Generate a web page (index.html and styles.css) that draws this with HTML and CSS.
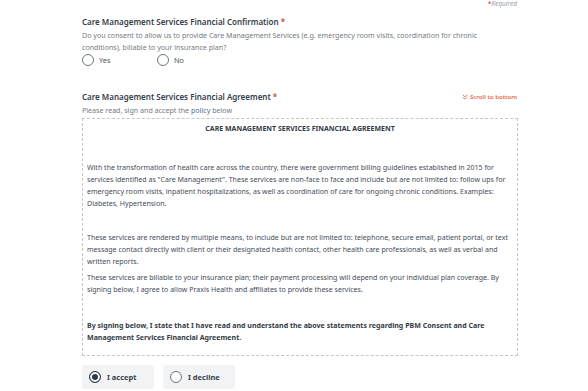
FILE: index.html
```html
<!DOCTYPE html>
<html lang="en">
<head>
    <meta charset="UTF-8">
    <title>Care Management Services</title>
    <link rel="stylesheet" href="styles.css">
</head>
<body>
    <div class="page">
        <div class="required"><span class="star">*</span>Required</div>

        <!-- Confirmation question -->
        <section class="field">
            <h2 class="field-title">Care Management Services Financial Confirmation <span class="star">*</span></h2>
            <p class="field-desc wrap">Do you consent to allow us to provide Care Management Services (e.g. emergency room visits, coordination for chronic conditions), billable to your insurance plan?</p>
            <div class="choices">
                <label class="choice"><span class="radio"></span>Yes</label>
                <label class="choice"><span class="radio"></span>No</label>
            </div>
        </section>

        <!-- Agreement -->
        <section class="field agreement">
            <div class="field-head">
                <h2 class="field-title">Care Management Services Financial Agreement <span class="star">*</span></h2>
                <a class="scroll-link" href="#">
                    <svg width="6" height="6" viewBox="0 0 8 8"><path d="M1 1 4 3.8 7 1M1 4.2 4 7 7 4.2" fill="none" stroke="currentColor" stroke-width="1.1"/></svg>
                    Scroll to bottom
                </a>
            </div>
            <p class="field-desc">Please read, sign and accept the <a href="#">policy</a> below</p>
            <div class="policy">
                <h3 class="policy-title">CARE MANAGEMENT SERVICES FINANCIAL AGREEMENT</h3>
                <p class="first">With the transformation of health care across the country, there were government billing guidelines established in 2015 for services identified as "Care Management". These services are non-face to face and include but are not limited to: follow ups for emergency room visits, inpatient hospitalizations, as well as coordination of care for ongoing chronic conditions. Examples: Diabetes, Hypertension.</p>
                <p class="gap-lg">These services are rendered by multiple means, to include but are not limited to: telephone, secure email, patient portal, or text message contact directly with client or their designated health contact, other health care professionals, as well as verbal and written reports.</p>
                <p>These services are billable to your insurance plan; their payment processing will depend on your individual plan coverage. By signing below, I agree to allow Praxis Health and affiliates to provide these services.</p>
                <p class="gap-lg strong">By signing below, I state that I have read and understand the above statements regarding PBM Consent and Care Management Services Financial Agreement.</p>
            </div>
            <div class="accept-row">
                <label class="accept-btn"><span class="radio checked"></span>I accept</label>
                <label class="accept-btn"><span class="radio"></span>I decline</label>
            </div>
        </section>
    </div>
</body>
</html>
```

FILE: styles.css
```css
* {
    margin: 0;
    padding: 0;
    box-sizing: border-box;
}
body {
    background: #fff;
    font-family: "Noto Sans", "Open Sans", sans-serif;
    color: #3b4350;
}
.page {
    width: 436px;
    margin-left: 82px;
}
.required {
    text-align: right;
    font-size: 6.5px;
    font-style: italic;
    color: #9aa0a8;
    line-height: 7px;
    padding-right: 1px;
}
.star {
    color: #d0413a;
    font-style: normal;
}

.field {
    margin-top: 9px;
}
.field-title {
    font-size: 8px;
    font-weight: 600;
    line-height: 12px;
    color: #343d49;
}
.field-desc {
    font-size: 7.1px;
    line-height: 12px;
    color: #757b83;
    margin-top: 1px;
}
.field-desc.wrap {
    max-width: 420px;
}
.field-desc a {
    color: #4f6f93;
    text-decoration: none;
}

.choices {
    display: flex;
    margin-top: 1px;
}
.choice {
    display: flex;
    align-items: center;
    gap: 5px;
    width: 75px;
    font-size: 7.3px;
    color: #4a525d;
}
.radio {
    width: 12px;
    height: 12px;
    border: 1px solid #6c7580;
    border-radius: 50%;
    background: #fff;
    flex: none;
}
.radio.checked {
    border-color: #2f3f4f;
    box-shadow: inset 0 0 0 2px #fff;
    background: #2c3c4c;
}

.agreement {
    margin-top: 25px;
}
.field-head {
    display: flex;
    justify-content: space-between;
    align-items: flex-start;
}
.scroll-link {
    display: flex;
    align-items: center;
    gap: 2px;
    margin-top: 2px;
    font-size: 6px;
    font-weight: 600;
    line-height: 8px;
    color: #e2694f;
    text-decoration: none;
    padding-right: 1px;
}

.policy {
    margin-top: 2px;
    border: 1px dashed #c3c7cc;
    padding: 3px 4px 12px;
    font-size: 7.05px;
    line-height: 12px;
    color: #454d57;
}
.policy-title {
    text-align: center;
    font-size: 7px;
    font-weight: 700;
    line-height: 14px;
    color: #333b45;
}
.policy p {
    margin-top: 4px;
}
.policy p.first {
    margin-top: 25px;
}
.policy p.gap-lg {
    margin-top: 22px;
}
.policy p.strong {
    margin-top: 24px;
    font-weight: 700;
    color: #333b45;
}

.accept-row {
    display: flex;
    gap: 9px;
    margin-top: 9px;
}
.accept-btn {
    display: flex;
    align-items: center;
    gap: 6px;
    width: 72px;
    height: 24px;
    padding-left: 7px;
    background: #f1f3f5;
    border-radius: 3px;
    font-size: 7.5px;
    font-weight: 700;
    color: #3a424c;
}
```
